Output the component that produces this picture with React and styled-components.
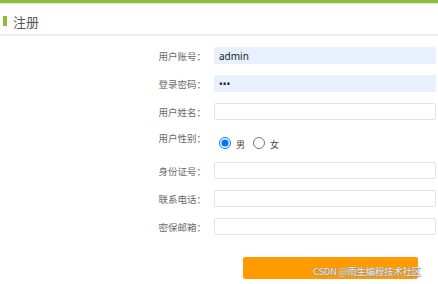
import React from "react";
import styled, { createGlobalStyle } from "styled-components";

const Global = createGlobalStyle`
  html, body { margin: 0; padding: 0; background: #fff; }
  body { font-family: "Noto Sans CJK SC", "Noto Sans", sans-serif; width: 438px; height: 284px; overflow: hidden; }
  * { box-sizing: border-box; }
`;

const Page = styled.div`
  position: relative;
  width: 438px;
  height: 284px;
  border-top: 3px solid #8dbb3b;
`;

const TopTint = styled.div`
  height: 1px;
  background: #e4efcd;
`;

const Header = styled.div`
  display: flex;
  align-items: center;
  gap: 6px;
  height: 32px;
  padding: 4px 0 0 3px;
  border-bottom: 2px solid #eeeeee;
`;

const Marker = styled.span`
  width: 4px;
  height: 10px;
  background: #8dbb3b;
`;

const Title = styled.h1`
  margin: 0;
  font-size: 13px;
  font-weight: 400;
  color: #555;
  line-height: 1;
`;

const Form = styled.form`
  display: flex;
  flex-direction: column;
  padding-top: 11px;
`;

const Row = styled.div`
  display: grid;
  grid-template-columns: 206px 222px;
  column-gap: 8px;
  height: ${(p) => p.$h || 17}px;
  margin-bottom: 11px;
  align-items: ${(p) => (p.$top ? "start" : "center")};
`;

const Label = styled.label`
  text-align: right;
  font-size: 9.5px;
  color: #6a6a6a;
  line-height: 12px;
  padding-top: ${(p) => (p.$top ? 1 : 0)}px;
`;

const Input = styled.input`
  height: 17px;
  width: 222px;
  border: 1px solid ${(p) => (p.$filled ? "#e8f0fe" : "#e3e3e3")};
  background: ${(p) => (p.$filled ? "#e8f0fe" : "#fff")};
  border-radius: 2px;
  padding: 0 4px;
  font-family: "Noto Sans", "Noto Sans CJK SC", sans-serif;
  font-size: 10px;
  color: #222;
  outline: none;
`;

const Radios = styled.div`
  display: flex;
  align-items: center;
  padding-top: 3px;
  font-size: 9px;
  color: #444;
`;

const Radio = styled.input`
  width: 12px;
  height: 12px;
  margin: 0 5px 0 5px;
`;

const RadioText = styled.span`
  margin-top: 4px;
  margin-right: 3px;
`;

const ButtonRow = styled.div`
  display: flex;
  padding-left: 243px;
  margin-top: 11px;
`;

const Submit = styled.button`
  width: 175px;
  height: 22px;
  border: none;
  border-radius: 2px;
  background: #ff9b00;
  color: #fff;
  font-size: 10px;
`;

const Watermark = styled.div`
  position: absolute;
  left: 313px;
  top: 262px;
  font-size: 9.5px;
  color: #eeeeee;
  letter-spacing: -0.3px;
  text-shadow: 0 0 1px #777, 1px 1px 1px #999;
  white-space: nowrap;
  line-height: 12px;
`;

export default function App() {
  return (
    <Page>
      <Global />
      <TopTint />
      <Header>
        <Marker />
        <Title>注册</Title>
      </Header>
      <Form onSubmit={(e) => e.preventDefault()}>
        <Row>
          <Label>用户账号：</Label>
          <Input $filled defaultValue="admin" />
        </Row>
        <Row>
          <Label>登录密码：</Label>
          <Input $filled type="password" defaultValue="123" />
        </Row>
        <Row>
          <Label>用户姓名：</Label>
          <Input />
        </Row>
        <Row $h={20} $top>
          <Label $top>用户性别：</Label>
          <Radios>
            <Radio type="radio" name="sex" defaultChecked />
            <RadioText>男</RadioText>
            <Radio type="radio" name="sex" />
            <RadioText>女</RadioText>
          </Radios>
        </Row>
        <Row>
          <Label>身份证号：</Label>
          <Input />
        </Row>
        <Row>
          <Label>联系电话：</Label>
          <Input />
        </Row>
        <Row>
          <Label>密保邮箱：</Label>
          <Input />
        </Row>
        <ButtonRow>
          <Submit type="submit" />
        </ButtonRow>
      </Form>
      <Watermark>CSDN @雨生编程技术社区</Watermark>
    </Page>
  );
}
